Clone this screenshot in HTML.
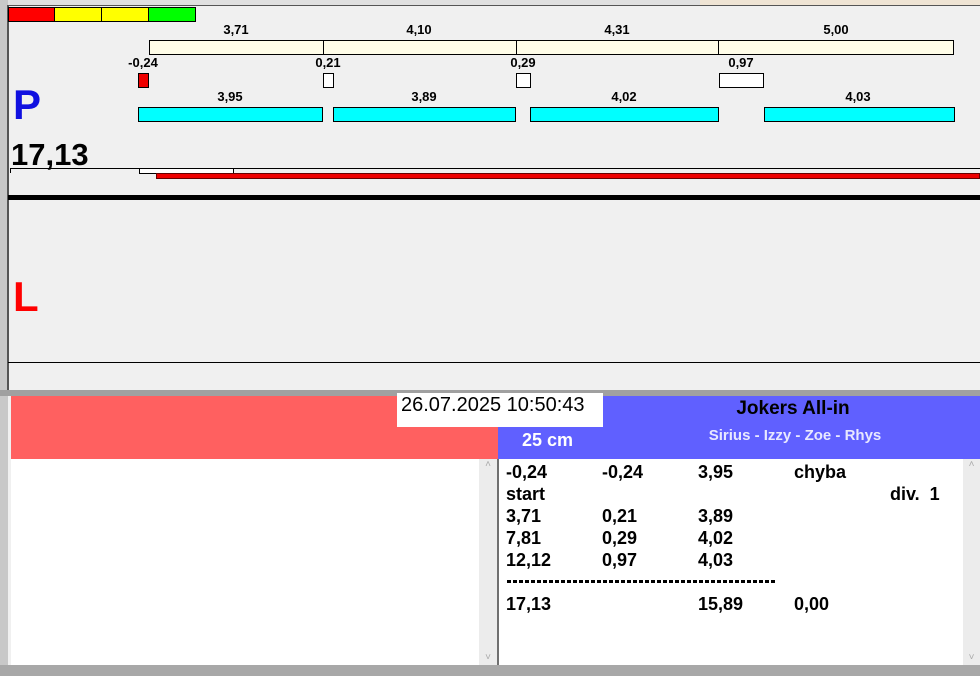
<!DOCTYPE html>
<html><head><meta charset="utf-8"><style>
*{margin:0;padding:0;box-sizing:border-box}
body{width:980px;height:676px;overflow:hidden;background:#f0f0f0;position:relative;font-family:"Liberation Sans",Arial,sans-serif}
.a{position:absolute}
.t{position:absolute;font-weight:bold;font-size:13px;color:#000;text-align:center;width:80px;line-height:14px}
.cr{background:#fffde8;border:1px solid #000}
.cy{background:#00ffff;border:1px solid #000}
.r{position:absolute;font-weight:bold;font-size:18px;line-height:22px;color:#000}
</style></head><body>
<div class="a" style="left:0;top:0;width:980px;height:5px;background:#e0e0e0"></div>
<div class="a" style="left:700px;top:0;width:280px;height:5px;background:#efe4d4"></div>
<div class="a" style="left:0;top:0;width:8px;height:676px;background:#c8c8c8"></div>
<div class="a" style="left:7px;top:5px;width:2px;height:385px;background:#555"></div>
<div class="a" style="left:8px;top:5px;width:972px;height:1px;background:#555"></div>
<div class="a" style="left:8px;top:7px;width:47px;height:15px;background:#f00;border:1px solid #000"></div>
<div class="a" style="left:54px;top:7px;width:48px;height:15px;background:#ff0;border:1px solid #000"></div>
<div class="a" style="left:101px;top:7px;width:48px;height:15px;background:#ff0;border:1px solid #000"></div>
<div class="a" style="left:148px;top:7px;width:48px;height:15px;background:#0f0;border:1px solid #000"></div>
<div class="a cr" style="left:149px;top:40px;width:175px;height:15px"></div>
<div class="a cr" style="left:323px;top:40px;width:194px;height:15px"></div>
<div class="a cr" style="left:516px;top:40px;width:203px;height:15px"></div>
<div class="a cr" style="left:718px;top:40px;width:236px;height:15px"></div>
<div class="t" style="left:196px;top:23px">3,71</div>
<div class="t" style="left:379px;top:23px">4,10</div>
<div class="t" style="left:577px;top:23px">4,31</div>
<div class="t" style="left:796px;top:23px">5,00</div>
<div class="a" style="left:138px;top:73px;width:11px;height:15px;background:#e00;border:1px solid #000"></div>
<div class="a" style="left:323px;top:73px;width:11px;height:15px;background:#fff;border:1px solid #000"></div>
<div class="a" style="left:516px;top:73px;width:15px;height:15px;background:#fff;border:1px solid #000"></div>
<div class="a" style="left:719px;top:73px;width:45px;height:15px;background:#fff;border:1px solid #000"></div>
<div class="t" style="left:103px;top:56px">-0,24</div>
<div class="t" style="left:288px;top:56px">0,21</div>
<div class="t" style="left:483px;top:56px">0,29</div>
<div class="t" style="left:701px;top:56px">0,97</div>
<div class="a cy" style="left:138px;top:107px;width:185px;height:15px"></div>
<div class="a cy" style="left:333px;top:107px;width:183px;height:15px"></div>
<div class="a cy" style="left:530px;top:107px;width:189px;height:15px"></div>
<div class="a cy" style="left:764px;top:107px;width:191px;height:15px"></div>
<div class="t" style="left:190px;top:90px">3,95</div>
<div class="t" style="left:384px;top:90px">3,89</div>
<div class="t" style="left:584px;top:90px">4,02</div>
<div class="t" style="left:818px;top:90px">4,03</div>
<div class="a" style="left:13px;top:83px;font-size:42px;font-weight:bold;color:#1010e0;line-height:44px">P</div>
<div class="a" style="left:11px;top:138px;font-size:31px;font-weight:bold;color:#000;line-height:34px">17,13</div>
<div class="a" style="left:10px;top:168px;width:970px;height:1px;background:#000"></div>
<div class="a" style="left:10px;top:168px;width:1px;height:5px;background:#000"></div>
<div class="a" style="left:139px;top:168px;width:95px;height:6px;background:#fff;border:1px solid #000"></div>
<div class="a" style="left:156px;top:173px;width:824px;height:6px;background:#e00;border:1px solid #600"></div>
<div class="a" style="left:8px;top:195px;width:972px;height:5px;background:#000"></div>
<div class="a" style="left:13px;top:275px;font-size:42px;font-weight:bold;color:#f00;line-height:44px">L</div>
<div class="a" style="left:8px;top:362px;width:972px;height:1px;background:#000"></div>
<div class="a" style="left:0;top:390px;width:980px;height:6px;background:#a0a0a0"></div>
<div class="a" style="left:11px;top:396px;width:487px;height:63px;background:#ff6060"></div>
<div class="a" style="left:498px;top:396px;width:482px;height:63px;background:#6060ff"></div>
<div class="a" style="left:397px;top:393px;width:206px;height:34px;background:#fff;font-size:20px;line-height:24px;padding-left:4px;padding-top:0">26.07.2025 10:50:43</div>
<div class="a" style="left:603px;top:398px;width:380px;text-align:center;font-size:19px;font-weight:bold;line-height:22px">Jokers All-in</div>
<div class="a" style="left:522px;top:429px;font-size:18px;font-weight:bold;color:#fff;line-height:22px">25 cm</div>
<div class="a" style="left:610px;top:427px;width:370px;text-align:center;font-size:15px;font-weight:bold;color:#e8e8ff;line-height:18px">Sirius - Izzy - Zoe - Rhys</div>
<div class="a" style="left:11px;top:459px;width:486px;height:206px;background:#fff"></div>
<div class="a" style="left:479px;top:459px;width:18px;height:206px;background:#ececec;color:#aaa;font-size:10px;text-align:center">˄<div style="position:absolute;bottom:2px;width:18px">˅</div></div>
<div class="a" style="left:497px;top:459px;width:2px;height:206px;background:#707070"></div>
<div class="a" style="left:499px;top:459px;width:481px;height:206px;background:#fff"></div>
<div class="a" style="left:963px;top:459px;width:17px;height:206px;background:#ececec;color:#aaa;font-size:10px;text-align:center">˄<div style="position:absolute;bottom:2px;width:17px">˅</div></div>
<div class="r" style="left:506px;top:461px">-0,24</div><div class="r" style="left:602px;top:461px">-0,24</div><div class="r" style="left:698px;top:461px">3,95</div><div class="r" style="left:794px;top:461px">chyba</div>
<div class="r" style="left:506px;top:483px">start</div><div class="r" style="left:890px;top:483px">div.&nbsp; 1</div>
<div class="r" style="left:506px;top:505px">3,71</div><div class="r" style="left:602px;top:505px">0,21</div><div class="r" style="left:698px;top:505px">3,89</div>
<div class="r" style="left:506px;top:527px">7,81</div><div class="r" style="left:602px;top:527px">0,29</div><div class="r" style="left:698px;top:527px">4,02</div>
<div class="r" style="left:506px;top:549px">12,12</div><div class="r" style="left:602px;top:549px">0,97</div><div class="r" style="left:698px;top:549px">4,03</div>
<div class="a" style="left:507px;top:580px;width:269px;height:3px;background:repeating-linear-gradient(90deg,#000 0 4px,transparent 4px 6px)"></div>
<div class="r" style="left:506px;top:593px">17,13</div><div class="r" style="left:698px;top:593px">15,89</div><div class="r" style="left:794px;top:593px">0,00</div>
<div class="a" style="left:0;top:665px;width:980px;height:11px;background:#a8a8a8"></div>
</body></html>
